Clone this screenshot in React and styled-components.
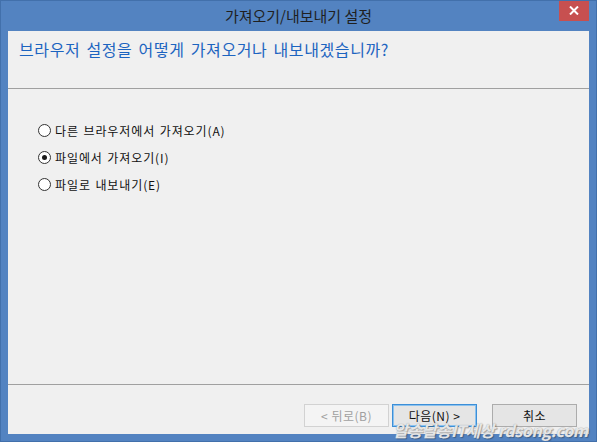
import React from 'react';
import styled, { createGlobalStyle } from 'styled-components';

const GlobalStyle = createGlobalStyle`
  html, body {
    margin: 0;
    padding: 0;
    background: #5383c1;
  }
  body {
    font-family: "Noto Sans CJK KR", "Noto Sans", sans-serif;
  }
`;

const Window = styled.div`
  position: relative;
  width: 597px;
  height: 442px;
  box-sizing: border-box;
  background: #5383c1;
  border: 1px solid #4270ab;
  display: flex;
  flex-direction: column;
  overflow: hidden;
`;

const TitleBar = styled.div`
  height: 30px;
  display: flex;
  align-items: center;
  justify-content: center;
  position: relative;
`;

const Title = styled.span`
  font-size: 15px;
  color: #1f1f1f;
  line-height: 1;
  margin-top: -1px;
`;

const CloseButton = styled.div`
  position: absolute;
  top: -1px;
  right: 7px;
  width: 30px;
  height: 21px;
  background: #c75050;
  display: flex;
  align-items: center;
  justify-content: center;
`;

const Client = styled.div`
  flex: 1;
  margin: 0 7px 7px 7px;
  background: #f0f0f0;
  display: flex;
  flex-direction: column;
`;

const Header = styled.div`
  height: 58px;
  box-sizing: border-box;
  padding: 6px 0 0 11px;
  border-bottom: 1px solid #a0a0a0;
`;

const Instruction = styled.div`
  font-size: 16px;
  color: #1c64c0;
  letter-spacing: 0.6px;
  word-spacing: 2px;
`;

const Body = styled.div`
  flex: 1;
  padding: 32px 0 0 30px;
  display: flex;
  flex-direction: column;
  gap: 8px;
  border-bottom: 1px solid #a0a0a0;
`;

const Option = styled.label`
  display: flex;
  align-items: center;
  gap: 4px;
  height: 19px;
  font-size: 12px;
  color: #111;
  letter-spacing: 0.9px;
  word-spacing: 1px;
`;

const RadioCircle = styled.span`
  width: 11px;
  height: 11px;
  border-radius: 50%;
  border: 1px solid #333;
  background: #fff;
  display: flex;
  align-items: center;
  justify-content: center;

  &::after {
    content: '';
    width: 5px;
    height: 5px;
    border-radius: 50%;
    background: ${props => (props.checked ? '#1a1a1a' : 'transparent')};
  }
`;

const Footer = styled.div`
  height: 49px;
  display: flex;
  justify-content: flex-end;
  align-items: flex-start;
  padding: 19px 12px 0 0;
  box-sizing: border-box;
  gap: 3px;
`;

const Button = styled.div`
  width: 85px;
  height: 23px;
  box-sizing: border-box;
  display: flex;
  align-items: center;
  justify-content: center;
  font-size: 12px;
  letter-spacing: 0.5px;
  margin-left: ${props => props.gapLeft || 0}px;
  background: ${props => (props.disabled ? '#f4f4f4' : '#e5e5e5')};
  color: ${props => (props.disabled ? '#a0a0a0' : '#111')};
  border: 1px solid ${props => {
    if (props.disabled) return '#d2d2d2';
    if (props.primary) return '#3c8fd8';
    return '#acacac';
  }};
  box-shadow: ${props => (props.primary ? 'inset 0 0 0 1px #8cc2ee' : 'none')};
`;

const Watermark = styled.div`
  position: absolute;
  right: 8px;
  bottom: 1px;
  font-family: "Noto Sans CJK KR", "Liberation Sans", sans-serif;
  font-size: 16px;
  line-height: 20px;
  font-weight: 700;
  font-style: italic;
  color: rgba(255, 255, 255, 0.8);
  letter-spacing: -0.3px;
  text-shadow: 0 0 1px #8a8a8a, 1px 1px 1px rgba(0, 0, 0, 0.3);
  pointer-events: none;
`;

const options = [
  { label: '다른 브라우저에서 가져오기(A)', checked: false },
  { label: '파일에서 가져오기(I)', checked: true },
  { label: '파일로 내보내기(E)', checked: false },
];

const App = () => {
  return (
    <>
      <GlobalStyle />
      <Window>
        <TitleBar>
          <Title>가져오기/내보내기 설정</Title>
          <CloseButton>
            <svg width="10" height="9" viewBox="0 0 10 9">
              <path d="M1 0.5 L9 8.5 M9 0.5 L1 8.5" stroke="#fff" strokeWidth="2" />
            </svg>
          </CloseButton>
        </TitleBar>
        <Client>
          <Header>
            <Instruction>브라우저 설정을 어떻게 가져오거나 내보내겠습니까?</Instruction>
          </Header>
          <Body>
            {options.map(opt => (
              <Option key={opt.label}>
                <RadioCircle checked={opt.checked} />
                {opt.label}
              </Option>
            ))}
          </Body>
          <Footer>
            <Button disabled>&lt; 뒤로(B)</Button>
            <Button primary>다음(N) &gt;</Button>
            <Button gapLeft={12}>취소</Button>
          </Footer>
        </Client>
        <Watermark>알송달송IT세상 rdsong.com</Watermark>
      </Window>
    </>
  );
};

export default App;
